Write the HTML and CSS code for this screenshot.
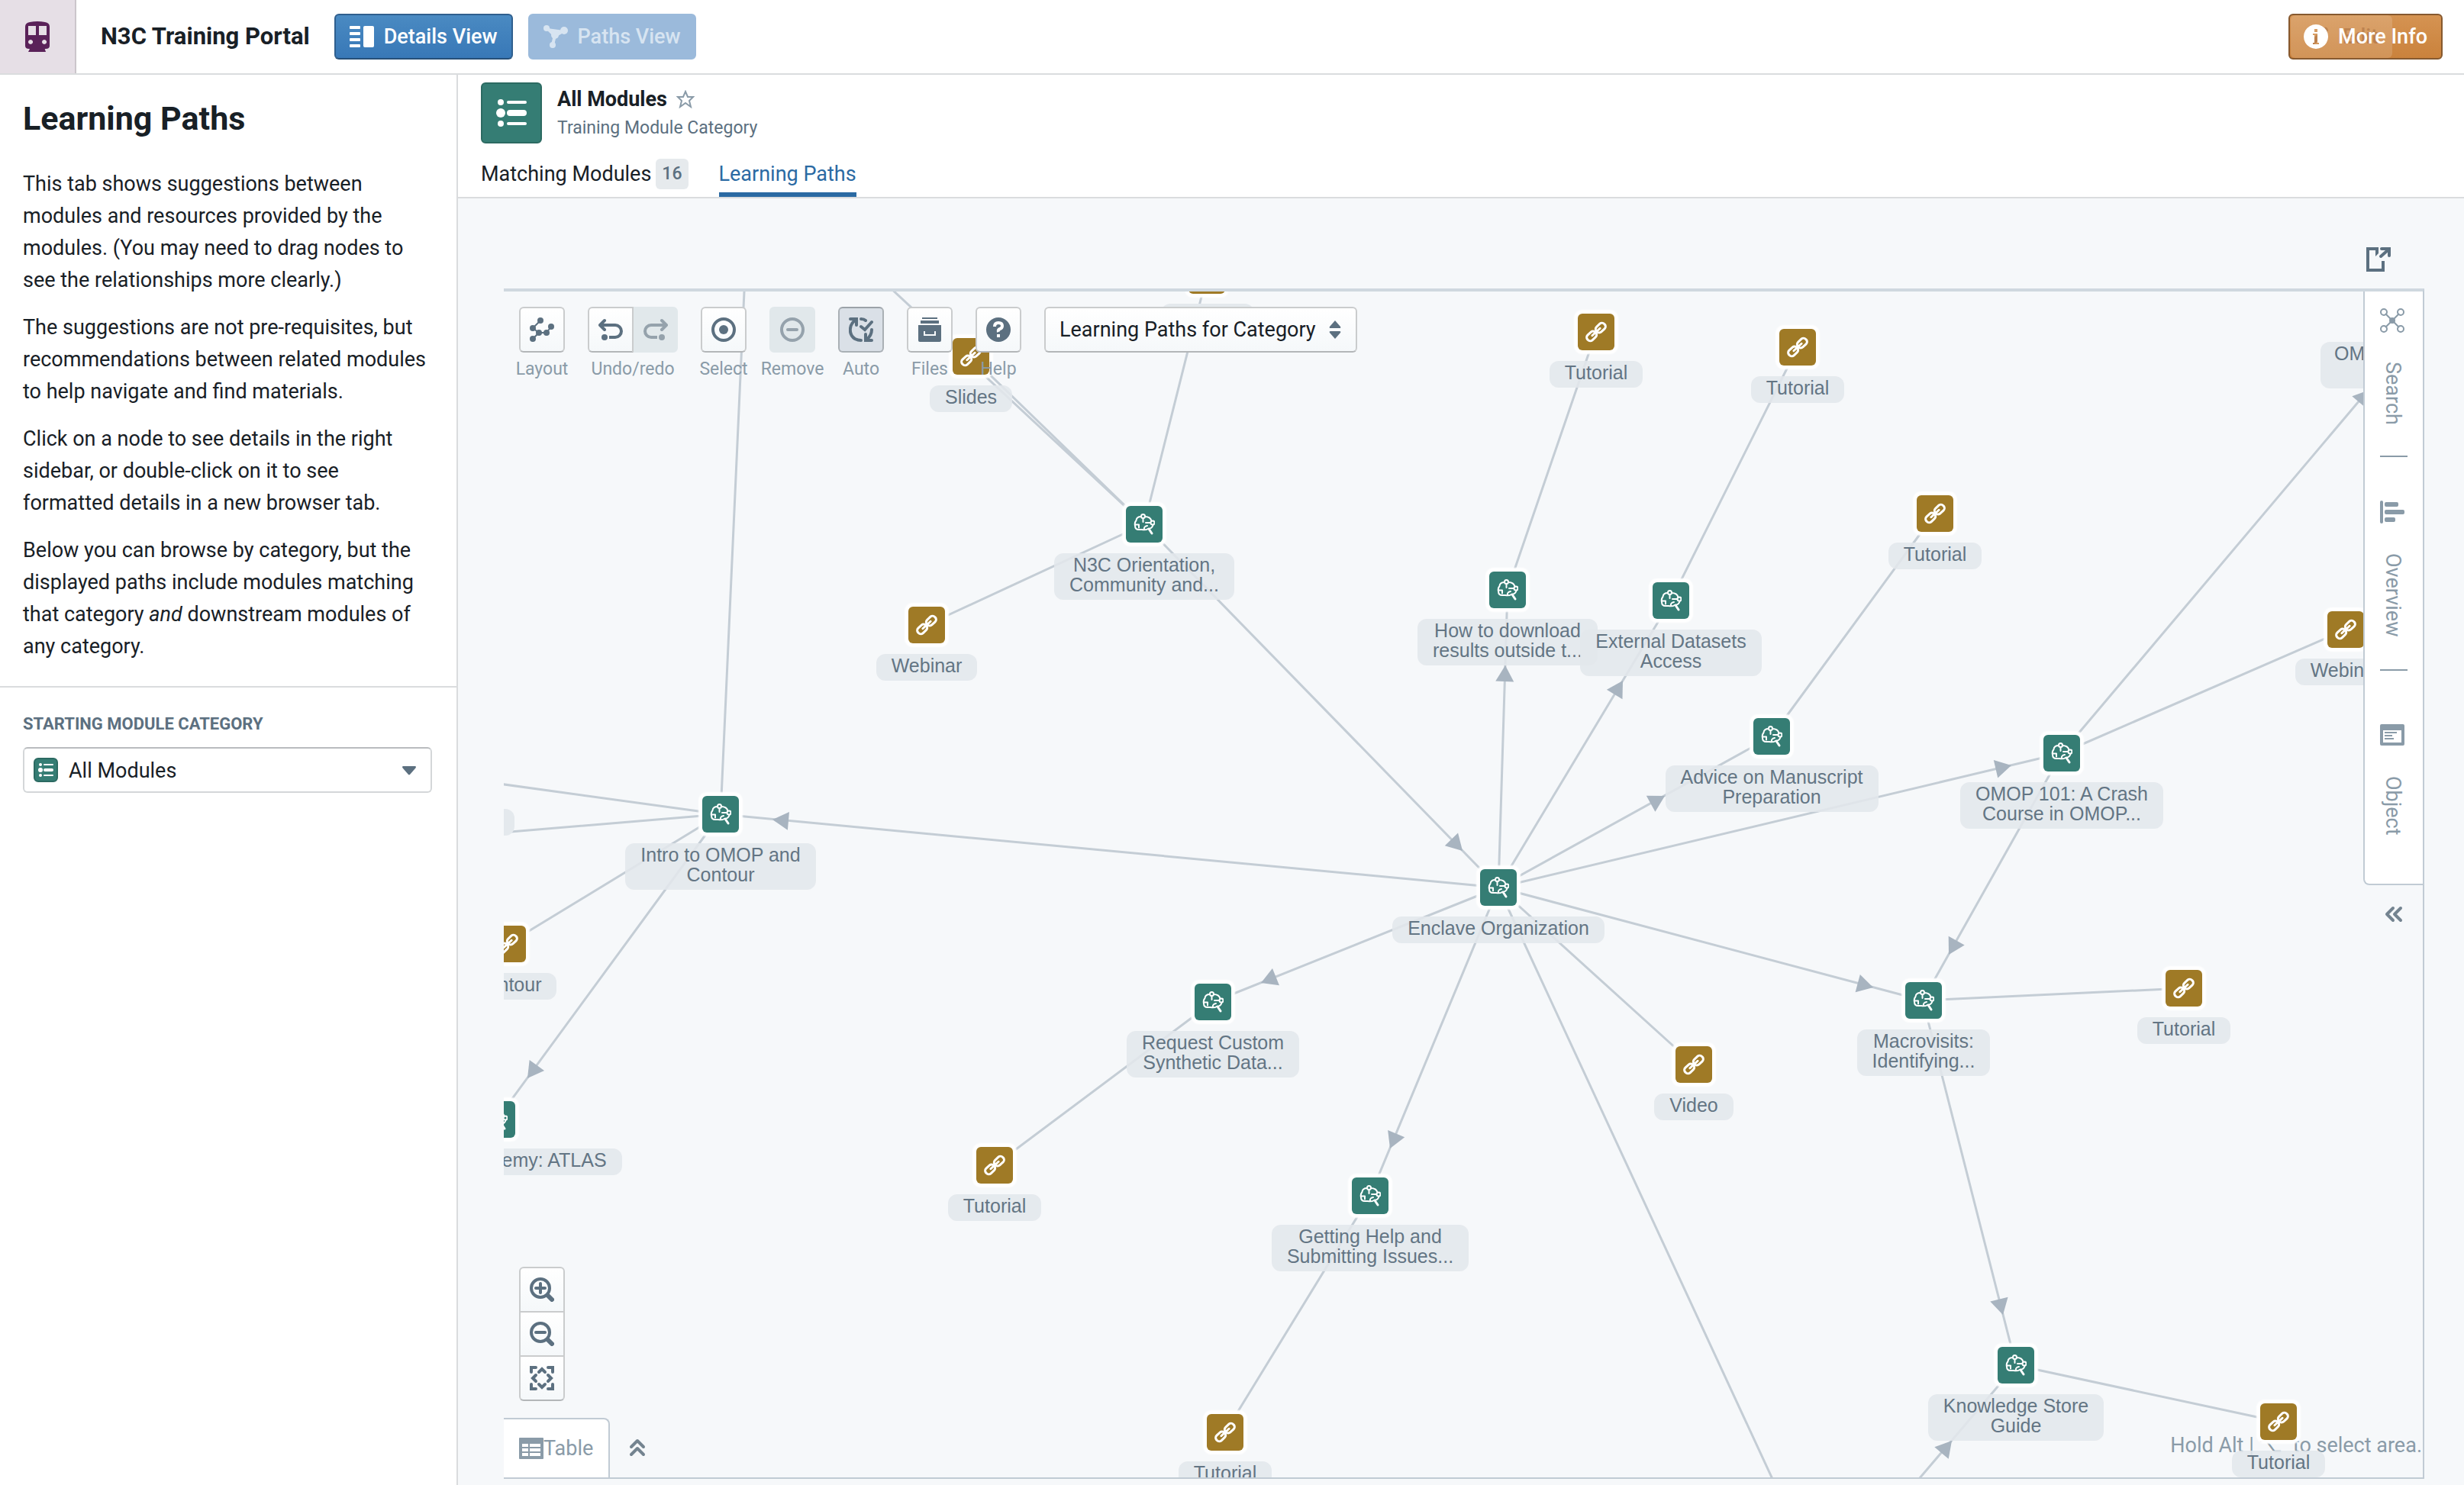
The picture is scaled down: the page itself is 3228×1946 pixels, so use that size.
FILE: index.html
```html
<!DOCTYPE html>
<html lang="en">
<head>
<meta charset="utf-8">
<meta name="viewport" content="width=device-width, initial-scale=1">
<title>N3C Training Portal</title>
<link rel="stylesheet" href="styles.css">
</head>
<body>
<svg class="sprite" aria-hidden="true">
  <symbol id="i-list" viewBox="0 0 40 40">
    <circle cx="6" cy="6" r="4"/><rect x="14" y="4" width="26" height="4" rx="2"/>
    <circle cx="6" cy="20" r="6"/><rect x="14" y="16" width="26" height="8" rx="4"/>
    <circle cx="6" cy="34" r="4"/><rect x="14" y="32" width="26" height="4" rx="2"/>
  </symbol>
  <symbol id="i-brain" viewBox="0 0 28 28">
    <g fill="none" stroke="#fff" stroke-width="2" stroke-linecap="round" stroke-linejoin="round">
      <circle cx="12.500" cy="3.500" r="2.500"/><circle cx="25" cy="12" r="2.500"/>
      <path d="M12.500 6v5M10 4Q4 4 3.500 9Q1 12 2 16Q2 21 7 21h4Q16 22 19 20Q24 20 25.500 15M15 4Q22 4 23.500 9.500"/>
      <path d="M2 14.500h5v4M22 12h-6M14 21q-1-4 4-5"/>
      <path d="M20 20l4 6" stroke-width="3"/>
    </g>
  </symbol>
  <symbol id="i-link" viewBox="-14 -14 28 28">
    <g transform="rotate(-43)" fill="none" stroke="#fff" stroke-width="3">
      <rect x="-15" y="-4.500" width="14" height="9" rx="4"/><rect x="1" y="-4.500" width="14" height="9" rx="4"/>
      <path d="M-7 0H7" stroke-linecap="round"/>
    </g>
  </symbol>
</svg>

<header class="topbar">
  <div class="brand">
    <svg width="32" height="40" viewBox="0 0 32 40" fill="#5a2259"><path fill-rule="evenodd" d="M6 1Q16-1 26 1q6 1 6 6v25q0 4-5 4H5q-5 0-5-4V7q0-5 6-6zM4 6v12h10V6zm14 0v12h10V6zM7 24a3 3 0 1 0 .1 0zm18 0a3 3 0 1 0 .1 0z"/><path d="M7 34h18l2 6H4z"/></svg>
  </div>
  <h1 class="portal-title">N3C Training Portal</h1>
  <button class="btn btn-primary" type="button">
    <svg width="32" height="28" viewBox="0 0 32 28" fill="#fff"><rect width="14" height="4" rx="1"/><rect y="8" width="14" height="4" rx="1"/><rect y="16" width="14" height="4" rx="1"/><rect y="24" width="14" height="4" rx="1"/><rect x="18" width="14" height="28" rx="2"/></svg>
    Details View
  </button>
  <button class="btn btn-disabled" type="button" disabled>
    <svg width="32" height="32" viewBox="0 0 32 32" fill="currentColor"><g stroke="currentColor" stroke-width="4"><path d="M5 5l10 10L27 8M15 14l-3 13"/></g><circle cx="4" cy="5" r="4"/><circle cx="15" cy="14" r="5"/><circle cx="27" cy="8" r="5"/><circle cx="12" cy="27" r="4"/></svg>
    Paths View
  </button>
  <button class="btn btn-warning" type="button">
    <span class="ghost" aria-hidden="true"><svg width="26" height="26" viewBox="0 0 26 26"><path d="M0 26l3-8L19 2q3-3 5 0t0 4L8 22z"/></svg>Edit</span>
    <svg width="32" height="32" viewBox="0 0 16 16" fill="#fff"><path fill-rule="evenodd" d="M8 0a8 8 0 1 0 .01 0zM7 3h2v2H7zM6 6h3v6h1v1H6v-1h1V7H6z"/></svg>
    <span class="btn-text">More Info</span>
  </button>
</header>

<div class="shell">
  <aside class="sidebar">
    <section class="intro">
      <h2>Learning Paths</h2>
      <p>This tab shows suggestions between<br>modules and resources provided by the<br>modules. (You may need to drag nodes to<br>see the relationships more clearly.)</p>
      <p>The suggestions are not pre-requisites, but<br>recommendations between related modules<br>to help navigate and find materials.</p>
      <p>Click on a node to see details in the right<br>sidebar, or double-click on it to see<br>formatted details in a new browser tab.</p>
      <p>Below you can browse by category, but the<br>displayed paths include modules matching<br>that category <em>and</em> downstream modules of<br>any category.</p>
    </section>
    <section class="filter">
      <label for="category">STARTING MODULE CATEGORY</label>
      <div class="select-box">
        <span class="chip"><svg width="20" height="20"><use href="#i-list"/></svg></span>
        <select id="category"><option>All Modules</option></select>
        <svg class="caret" width="20" height="12" viewBox="0 0 16 10"><path d="M1 0h14q1 1 0 2L9 9q-1 1-2 0L1 2Q0 1 1 0z"/></svg>
      </div>
    </section>
  </aside>

  <main class="main">
    <div class="object-head">
      <div class="object-row">
        <span class="object-icon"><svg width="42" height="40"><use href="#i-list"/></svg></span>
        <div>
          <h2 class="object-title">All Modules <svg width="24" height="24" viewBox="0 0 24 24" fill="none" stroke="#8a9ba8" stroke-width="2"><path d="M12 2l3 7h7l-5 5 2 8-7-5-7 5 2-8-5-5h7z"/></svg></h2>
          <p class="object-sub">Training Module Category</p>
        </div>
      </div>
      <nav class="tabs">
        <a href="#modules" class="tab">Matching Modules <span class="tag">16</span></a>
        <a href="#paths" class="tab tab-active">Learning Paths</a>
      </nav>
    </div>

    <div class="workspace">
      <div class="open-row">
        <button class="icon-btn" type="button" aria-label="Open in new tab"><svg width="32" height="32" viewBox="0 0 32 32" fill="none" stroke="#5c7080" stroke-width="4"><path d="M15 2H2v28h20V18"/><path d="M12 0h4v8l-4 4z" fill="#5c7080" stroke="none"/><path d="M19 12L28 4M20 2h10v9" stroke-linecap="round"/></svg></button>
      </div>

      <div class="canvas">
        <p class="hint">Hold Alt | ⌥ &nbsp;to select area.</p>

        <svg class="edges" aria-hidden="true">
          <defs>
            <path id="arrow" d="M0 0L-21-12V12z"/>
          </defs>
          <g class="lines" transform="translate(-660 -382)">
            <path d="M1499 687L1272 467M1499 687L1150 362M1499 687L1581 361M1499 687L1214 819M1499 687L1963 1163"/>
            <path d="M944 1067L975 382M944 1067L610 1021M944 1067L560 1099M944 1067L665 1237M944 1067L651 1467"/>
            <path d="M1963 1163L944 1067M1963 1163L1975 773M1963 1163L2189 787M1963 1163L2321 965M1963 1163L2701 987M1963 1163L2519 1311M1963 1163L2219 1395M1963 1163L1589 1313M1963 1163L1795 1567M1963 1163L2322 1938"/>
            <path d="M1975 773L2091 435M2189 787L2355 455M2321 965L2535 673M2701 987L3188 410M2701 987L3073 825M2701 987L2519 1311"/>
            <path d="M2519 1311L2861 1295M2519 1311L2641 1789M2641 1789L2985 1863M2641 1789L2514 1938M1589 1313L1303 1527M1795 1567L1605 1877"/>
          </g>
          <g class="arrows" transform="translate(-660 -382)">
            <use href="#arrow" transform="translate(1012 1074) rotate(185)"/>
            <use href="#arrow" transform="translate(1916 1115) rotate(46)"/>
            <use href="#arrow" transform="translate(1652 1288) rotate(158)"/>
            <use href="#arrow" transform="translate(1821 1505) rotate(113)"/>
            <use href="#arrow" transform="translate(1972 872) rotate(-88)"/>
            <use href="#arrow" transform="translate(2126 892) rotate(-59)"/>
            <use href="#arrow" transform="translate(2181 1043) rotate(-29)"/>
            <use href="#arrow" transform="translate(2635 1003) rotate(-13)"/>
            <use href="#arrow" transform="translate(2454 1294) rotate(15)"/>
            <use href="#arrow" transform="translate(2553 1251) rotate(119)"/>
            <use href="#arrow" transform="translate(2624 1723) rotate(76)"/>
            <use href="#arrow" transform="translate(2557 1888) rotate(-50)"/>
            <use href="#arrow" transform="translate(691 1413) rotate(126)"/>
            <use href="#arrow" transform="translate(3104 511) rotate(-50)"/>
          </g>
          <g class="plates" transform="translate(-660 -382)">
            <rect x="550" y="1060" width="124" height="35" rx="12"/>
            <rect x="1521" y="398" width="122" height="35" rx="12"/>
          </g>
        </svg>

        <div class="node link" style="left:921px;top:-21px"><i><svg width="28" height="28"><use href="#i-link"/></svg></i></div>
        <div class="node link" style="left:612px;top:85px"><i><svg width="28" height="28"><use href="#i-link"/></svg></i><span>Slides</span></div>
        <div class="node link" style="left:554px;top:437px"><i><svg width="28" height="28"><use href="#i-link"/></svg></i><span>Webinar</span></div>
        <div class="node" style="left:839px;top:305px"><i><svg width="28" height="28"><use href="#i-brain"/></svg></i><span>N3C Orientation,<br>Community and...</span></div>
        <div class="node" style="left:284px;top:685px"><i><svg width="28" height="28"><use href="#i-brain"/></svg></i><span>Intro to OMOP and<br>Contour</span></div>
        <div class="node link" style="left:5px;top:855px"><i><svg width="28" height="28"><use href="#i-link"/></svg></i><span>Contour</span></div>
        <div class="node" style="left:-9px;top:1085px"><i><svg width="28" height="28"><use href="#i-brain"/></svg></i><span>EHDEN Academy: ATLAS</span></div>
        <div class="node" style="left:1315px;top:391px"><i><svg width="28" height="28"><use href="#i-brain"/></svg></i><span>How to download<br>results outside t...</span></div>
        <div class="node" style="left:1529px;top:405px"><i><svg width="28" height="28"><use href="#i-brain"/></svg></i><span>External Datasets<br>Access</span></div>
        <div class="node" style="left:1661px;top:583px"><i><svg width="28" height="28"><use href="#i-brain"/></svg></i><span>Advice on Manuscript<br>Preparation</span></div>
        <div class="node" style="left:2041px;top:605px"><i><svg width="28" height="28"><use href="#i-brain"/></svg></i><span>OMOP 101: A Crash<br>Course in OMOP...</span></div>
        <div class="node link" style="left:1431px;top:53px"><i><svg width="28" height="28"><use href="#i-link"/></svg></i><span>Tutorial</span></div>
        <div class="node link" style="left:1695px;top:73px"><i><svg width="28" height="28"><use href="#i-link"/></svg></i><span>Tutorial</span></div>
        <div class="node link" style="left:1875px;top:291px"><i><svg width="28" height="28"><use href="#i-link"/></svg></i><span>Tutorial</span></div>
        <div class="node link" style="left:2413px;top:443px"><i><svg width="28" height="28"><use href="#i-link"/></svg></i><span>Webinar</span></div>
        <div class="node" style="left:2528px;top:28px"><i></i><span class="wide">OMOP<br>&nbsp;</span></div>
        <div class="node" style="left:1303px;top:781px"><i><svg width="28" height="28"><use href="#i-brain"/></svg></i><span>Enclave Organization</span></div>
        <div class="node" style="left:929px;top:931px"><i><svg width="28" height="28"><use href="#i-brain"/></svg></i><span>Request Custom<br>Synthetic Data...</span></div>
        <div class="node link" style="left:643px;top:1145px"><i><svg width="28" height="28"><use href="#i-link"/></svg></i><span>Tutorial</span></div>
        <div class="node" style="left:1135px;top:1185px"><i><svg width="28" height="28"><use href="#i-brain"/></svg></i><span>Getting Help and<br>Submitting Issues...</span></div>
        <div class="node link" style="left:945px;top:1495px"><i><svg width="28" height="28"><use href="#i-link"/></svg></i><span>Tutorial</span></div>
        <div class="node link" style="left:1559px;top:1013px"><i><svg width="28" height="28"><use href="#i-link"/></svg></i><span>Video</span></div>
        <div class="node" style="left:1860px;top:929px"><i><svg width="28" height="28"><use href="#i-brain"/></svg></i><span>Macrovisits:<br>Identifying...</span></div>
        <div class="node link" style="left:2201px;top:913px"><i><svg width="28" height="28"><use href="#i-link"/></svg></i><span>Tutorial</span></div>
        <div class="node" style="left:1981px;top:1407px"><i><svg width="28" height="28"><use href="#i-brain"/></svg></i><span>Knowledge Store<br>Guide</span></div>
        <div class="node link" style="left:2325px;top:1481px"><i><svg width="28" height="28"><use href="#i-link"/></svg></i><span>Tutorial</span></div>

        <div class="toolbar">
          <div class="tool"><button type="button" aria-label="Layout"><svg width="32" height="32" viewBox="0 0 32 32"><g fill="currentColor"><path d="M4 14L14 4M4 14l8 6M12 20h10M22 20l6-8M4 28l8-8" stroke="currentColor" stroke-width="2"/><circle cx="14" cy="4" r="4"/><circle cx="4" cy="14" r="4"/><circle cx="28" cy="12" r="4"/><circle cx="12" cy="20" r="4"/><circle cx="22" cy="20" r="4"/><circle cx="4" cy="28" r="4"/></g></svg></button><span>Layout</span></div>
          <div class="tool"><div class="pair">
            <button type="button" aria-label="Undo"><svg width="32" height="32" viewBox="0 0 32 32" fill="none" stroke="currentColor" stroke-width="4"><path d="M3 10h19a8 8 0 0 1 0 16h-8"/><path d="M8 4l-6 6 6 6" stroke-linecap="round" stroke-linejoin="round"/><circle cx="8" cy="26" r="4" fill="currentColor" stroke="none"/></svg></button><button type="button" aria-label="Redo" disabled><svg width="32" height="32" viewBox="0 0 32 32" fill="none" stroke="currentColor" stroke-width="4"><path d="M24 4l6 6-6 6" stroke-linecap="round" stroke-linejoin="round"/><path d="M29 10H10a8 8 0 0 0 0 16h8"/><circle cx="24" cy="26" r="4" fill="currentColor" stroke="none"/></svg></button></div><span>Undo/redo</span></div>
          <div class="tool"><button type="button" aria-label="Select"><svg width="32" height="32" viewBox="0 0 32 32"><circle cx="16" cy="16" r="14" fill="none" stroke="currentColor" stroke-width="4"/><circle cx="16" cy="16" r="6" fill="currentColor"/></svg></button><span>Select</span></div>
          <div class="tool"><button type="button" aria-label="Remove" disabled><svg width="32" height="32" viewBox="0 0 32 32" fill="none" stroke="currentColor" stroke-width="4"><circle cx="16" cy="16" r="14"/><path d="M10 16h12" stroke-linecap="round"/></svg></button><span>Remove</span></div>
          <div class="tool"><button class="pressed" type="button" aria-label="Auto"><svg width="32" height="32" viewBox="0 0 32 32" fill="none" stroke="currentColor" stroke-width="4" stroke-linecap="round"><path d="M2 2h8v8M10 3C0 8-1 22 8 28q4 2 8 2M16 2q4 0 6 2" /><path d="M16 12l5 4 9-10M22 22v8h8M23 29q7-5 7-13"/></svg></button><span>Auto</span></div>
          <div class="tool"><button type="button" aria-label="Files"><svg width="32" height="32" viewBox="0 0 32 32" fill="currentColor"><path d="M6 0h20v2H6zM4 4h24v4H4z"/><path fill-rule="evenodd" d="M1 10h30v20q0 2-2 2H3q-2 0-2-2zM8 18v6h16v-6h-2v4H10v-4z"/></svg></button><span>Files</span></div>
          <div class="tool"><button type="button" aria-label="Help"><svg width="32" height="32" viewBox="0 0 32 32"><circle cx="16" cy="16" r="16" fill="currentColor"/><path d="M11 12q0-5 5-5t5 4q0 3-3 4t-2 4" fill="none" stroke="#fff" stroke-width="4"/><path d="M14 22h4v4h-4z" fill="#fff"/></svg></button><span>Help</span></div>
          <div class="picker">
            <select aria-label="Graph template"><option>Learning Paths for Category</option></select>
            <svg width="20" height="24" viewBox="0 0 16 24"><path d="M8 0l7 8q1 2-1 2H2Q0 10 1 8zM8 24l7-8q1-2-1-2H2q-2 0-1 2z"/></svg>
          </div>
        </div>

        <div class="rail">
          <button type="button"><svg width="32" height="32" viewBox="0 0 32 32" fill="none" stroke="currentColor" stroke-width="2"><path d="M7 7l18 18M25 7L7 25"/><circle cx="5" cy="5" r="4"/><circle cx="27" cy="5" r="4"/><circle cx="5" cy="27" r="4"/><circle cx="27" cy="27" r="4"/><circle cx="16" cy="16" r="4" fill="currentColor" stroke="none"/></svg><span>Search</span></button>
          <button type="button"><svg width="32" height="32" viewBox="0 0 32 32" fill="currentColor"><rect y="1" width="4" height="30" rx="2"/><rect x="6" y="3" width="18" height="6" rx="2"/><rect x="6" y="13" width="26" height="6" rx="2"/><rect x="6" y="23" width="14" height="6" rx="2"/></svg><span>Overview</span></button>
          <button type="button"><svg width="32" height="32" viewBox="0 0 32 32" fill="currentColor"><path fill-rule="evenodd" d="M2 2h28q2 0 2 2v24q0 2-2 2H2q-2 0-2-2V4q0-2 2-2zM4 10v16h24V10z"/><path d="M6 12h16v2H6zM6 16h10v2H6zM6 20h12v2H6z"/></svg><span>Object</span></button>
        </div>
        <button class="expand-rail" type="button" aria-label="Expand panel"><svg width="24" height="24" viewBox="0 0 24 24"><path d="M11 4l-8 8 8 8M21 4l-8 8 8 8"/></svg></button>

        <div class="zoomer">
          <button type="button" aria-label="Zoom in"><svg width="32" height="32" viewBox="0 0 32 32" fill="none" stroke="currentColor" stroke-width="4" stroke-linecap="round"><circle cx="14" cy="14" r="12"/><path d="M8 14h12M14 8v12"/><path d="M24 24l5 5" stroke-width="6"/></svg></button>
          <button type="button" aria-label="Zoom out"><svg width="32" height="32" viewBox="0 0 32 32" fill="none" stroke="currentColor" stroke-width="4" stroke-linecap="round"><circle cx="14" cy="14" r="12"/><path d="M8 14h12"/><path d="M24 24l5 5" stroke-width="6"/></svg></button>
          <button type="button" aria-label="Zoom to fit"><svg width="32" height="32" viewBox="0 0 32 32" fill="none" stroke="currentColor" stroke-width="4" stroke-linecap="round"><path d="M2 8V2h6M24 2h6v6M30 24v6h-6M8 30H2v-6M12 8l4-4 4 4M24 12l4 4-4 4M12 24l4 4 4-4M8 12l-4 4 4 4"/></svg></button>
        </div>

        <div class="bottom">
          <button class="table-tab" type="button"><svg width="32" height="28" viewBox="0 0 32 28"><path fill-rule="evenodd" d="M1 0h30q1 0 1 1v26q0 1-1 1H1q-1 0-1-1V1q0-1 1-1zM4 8v4h8V8zm10 0v4h14V8zM4 14v4h8v-4zm10 0v4h14v-4zM4 20v4h8v-4zm10 0v4h14v-4z"/></svg>Table</button>
          <button class="expand-table" type="button" aria-label="Expand table"><svg width="24" height="24" viewBox="0 0 24 24"><path d="M4 11l8-8 8 8M4 21l8-8 8 8"/></svg></button>
        </div>
      </div>
    </div>
  </main>
</div>
</body>
</html>
```

FILE: styles.css
```css
* { box-sizing: border-box; }
body {
  margin: 0;
  min-height: 100vh;
  display: flex;
  flex-direction: column;
  background: #fff;
  color: #182026;
  font: 400 27px/42px Roboto, "Liberation Sans", sans-serif;
}
h1, h2, p { margin: 0; }
button, select { font: inherit; color: inherit; margin: 0; }
button { padding: 0; border: 0; background: none; }
svg { display: block; flex: none; }
.sprite { position: absolute; width: 0; height: 0; }

.topbar {
  display: flex;
  align-items: center;
  height: 98px;
  padding-right: 28px;
  border-bottom: 2px solid #dadcde;
}
.brand {
  align-self: stretch;
  width: 100px;
  display: flex;
  align-items: center;
  justify-content: center;
  background: #e6dfe6;
  border-right: 2px solid #cbc6cb;
}
.portal-title { font-size: 31px; font-weight: 700; margin: 0 32px; }
.btn {
  position: relative;
  display: flex;
  align-items: center;
  gap: 13px;
  height: 60px;
  padding: 0 18px;
  border: 2px solid;
  border-radius: 6px;
  color: #fff;
  font-weight: 500;
  white-space: nowrap;
}
.btn-primary {
  background: linear-gradient(#4a8ac2, #3878b7);
  border-color: #2f5f8e #2f5f8e #264f78;
}
.btn-disabled {
  margin-left: 20px;
  background: #9bbadb;
  border-color: #9bbadb;
  color: #d7e4f1;
}
.btn-warning {
  margin-left: auto;
  background: linear-gradient(#d59352, #ca823c);
  border-color: #86592f;
}
.btn-warning > svg, .btn-text { position: relative; }
.ghost {
  position: absolute;
  left: 1px;
  top: 0;
  bottom: 0;
  width: 133px;
  padding-left: 24px;
  display: flex;
  align-items: center;
  gap: 18px;
  background: rgba(255, 255, 255, .15);
  border-radius: 6px;
  color: rgba(140, 80, 40, .35);
  fill: rgba(140, 80, 40, .35);
}

.shell { flex: 1; display: flex; }
.sidebar {
  width: 600px;
  flex: none;
  border-right: 2px solid #dadcde;
}
.intro { padding: 32px 28px 31px 30px; border-bottom: 2px solid #dadcde; white-space: nowrap; }
.intro h2 { font-size: 43px; font-weight: 700; line-height: 50px; margin-bottom: 40px; }
.intro p + p { margin-top: 20px; }
.filter { padding: 32px 32px 30px 30px; }
.filter label {
  display: block;
  margin-bottom: 14px;
  font-size: 22px;
  font-weight: 700;
  line-height: 32px;
  color: #5c7080;
}
.select-box { position: relative; }
.select-box select {
  width: 100%;
  height: 60px;
  padding: 2px 60px 0 58px;
  appearance: none;
  background: #fff;
  border: 2px solid #d4d7d9;
  border-top-color: #b9bcbf;
  border-radius: 6px;
}
.chip {
  position: absolute;
  left: 14px;
  top: 14px;
  width: 32px;
  height: 32px;
  display: flex;
  align-items: center;
  justify-content: center;
  background: #357d74;
  border: 2px solid #2c6a62;
  border-radius: 6px;
  fill: #fff;
}
.caret { position: absolute; right: 20px; top: 25px; fill: #5c7080; }

.main { flex: 1; min-width: 0; display: flex; flex-direction: column; background: #f6f8fa; }
.object-head { padding: 10px 30px 0; background: #fff; border-bottom: 2px solid #dadcde; }
.object-row { display: flex; gap: 20px; }
.object-icon {
  width: 80px;
  height: 80px;
  display: flex;
  align-items: center;
  justify-content: center;
  background: #357d74;
  border: 2px solid #2c6a62;
  border-radius: 6px;
  fill: #fff;
}
.object-title { display: flex; align-items: center; gap: 12px; font-size: 27px; font-weight: 700; line-height: 36px; margin-top: 4px; }
.object-sub { font-size: 23px; line-height: 40px; color: #5c7080; }
.tabs { display: flex; gap: 40px; height: 70px; padding-top: 16px; }
.tab {
  display: flex;
  align-items: center;
  gap: 6px;
  border-bottom: 6px solid transparent;
  color: inherit;
  text-decoration: none;
}
.tab-active { color: #2b6aa3; border-color: #2b6aa3; }
.tag { padding: 0 8px; line-height: 40px; font-size: 23px; font-weight: 500; background: #e6eaed; border-radius: 6px; color: #5c7080; }

.workspace { flex: 1; display: flex; flex-direction: column; padding: 0 52px 8px 60px; }
.open-row { display: flex; justify-content: flex-end; height: 118px; padding: 64px 44px 0 0; }
.icon-btn { height: 32px; }

.canvas {
  position: relative;
  flex: 1;
  min-height: 1400px;
  overflow: hidden;
  border-top: 4px solid #cfd8df;
  border-bottom: 2px solid #c1cbd4;
  border-right: 2px solid #c1cbd4;
}
.hint { position: absolute; right: 1px; bottom: 21px; color: #8a9ba8; }
.edges { position: absolute; inset: 0; width: 100%; height: 100%; }
.lines { fill: none; stroke: #c4cdd5; stroke-width: 3; }
.arrows { fill: #a8b4c0; }
.plates { fill: #e4e9ed; }

.node {
  position: absolute;
  width: 0;
  margin-top: -24px;
  display: flex;
  flex-direction: column;
  align-items: center;
  gap: 14px;
  font: 400 25px/26px "Liberation Sans", sans-serif;
  color: #637584;
  text-align: center;
  white-space: nowrap;
}
.node i {
  width: 48px;
  height: 48px;
  display: flex;
  flex: none;
  align-items: center;
  justify-content: center;
  background: #357d74;
  border-radius: 6px;
  box-shadow: 0 0 2px 5px #fff;
}
.node.link i { background: #9f7a26; }
.node span { padding: 2px 20px 7px; background: rgba(226, 231, 236, .88); border-radius: 12px; }
.node .wide { width: 296px; padding-left: 18px; text-align: left; }

.toolbar { position: absolute; left: 20px; top: 20px; display: flex; gap: 30px; color: #5c7080; }
.tool { display: flex; flex-direction: column; align-items: center; }
.tool > button, .pair { flex: none; }
.tool > span { width: 0; display: flex; justify-content: center; font-size: 23px; line-height: 44px; color: #8a9ba8; }
.tool button, .zoomer button {
  width: 60px;
  height: 60px;
  display: flex;
  align-items: center;
  justify-content: center;
  border: 2px solid #cacccd;
  border-bottom-color: #b3b6b8;
  border-radius: 6px;
  background: linear-gradient(#fff, #f5f8fa);
  color: #5c7080;
}
.pair { display: flex; }
.pair button:first-child { border-radius: 6px 0 0 6px; }
.pair button:last-child { width: 58px; border-radius: 0 6px 6px 0; }
.tool button:disabled { background: #e1e8eb; border-color: #e1e8eb; color: #95a2ac; }
.tool .pressed { background: #dae0e7; border-color: #9ba2a8 #aab0b5 #aab0b5; }
.picker { position: relative; height: 60px; }
.picker select {
  width: 410px;
  height: 60px;
  padding: 0 18px;
  appearance: none;
  border: 2px solid #cacccd;
  border-bottom-color: #b3b6b8;
  border-radius: 6px;
  background: linear-gradient(#fff, #f5f8fa);
  color: #182026;
}
.picker svg { position: absolute; right: 19px; top: 18px; fill: #5c7080; }

.rail {
  position: absolute;
  right: -2px;
  top: 0;
  width: 80px;
  height: 778px;
  padding: 0 20px;
  display: flex;
  flex-direction: column;
  background: #fff;
  border: solid #c1cbd4;
  border-width: 0 0 2px 2px;
  border-bottom-left-radius: 8px;
}
.rail button {
  width: 36px;
  height: 280px;
  padding-top: 68px;
  display: flex;
  flex-direction: column;
  gap: 38px;
  align-items: flex-start;
  border-bottom: 2px solid #8a9ba8;
  color: #8a9ba8;
  line-height: 34px;
}
.rail button:first-child { height: 218px; padding-top: 22px; }
.rail button:nth-child(2) { padding-top: 56px; }
.rail button:last-child { border: 0; }
.rail span { writing-mode: vertical-rl; }
.expand-rail { position: absolute; right: 26px; top: 804px; }
.expand-rail path, .expand-table path { fill: none; stroke: #748490; stroke-width: 4; stroke-linecap: round; stroke-linejoin: round; }

.zoomer { position: absolute; left: 20px; bottom: 100px; }
.zoomer button { border-radius: 0; border-bottom-color: #cacccd; }
.zoomer button + button { border-top: 0; height: 58px; }
.zoomer button:first-child { border-radius: 6px 6px 0 0; }
.zoomer button:last-child { border-radius: 0 0 6px 6px; border-bottom-color: #b3b6b8; }

.bottom { position: absolute; left: 0; bottom: 0; display: flex; align-items: center; gap: 24px; }
.table-tab {
  height: 78px;
  padding: 0 20px;
  display: flex;
  align-items: center;
  background: #fff;
  border: solid #c1cbd4;
  border-width: 2px 2px 0 0;
  border-top-right-radius: 8px;
  color: #8a9ba8;
  fill: #8a9ba8;
}
```
